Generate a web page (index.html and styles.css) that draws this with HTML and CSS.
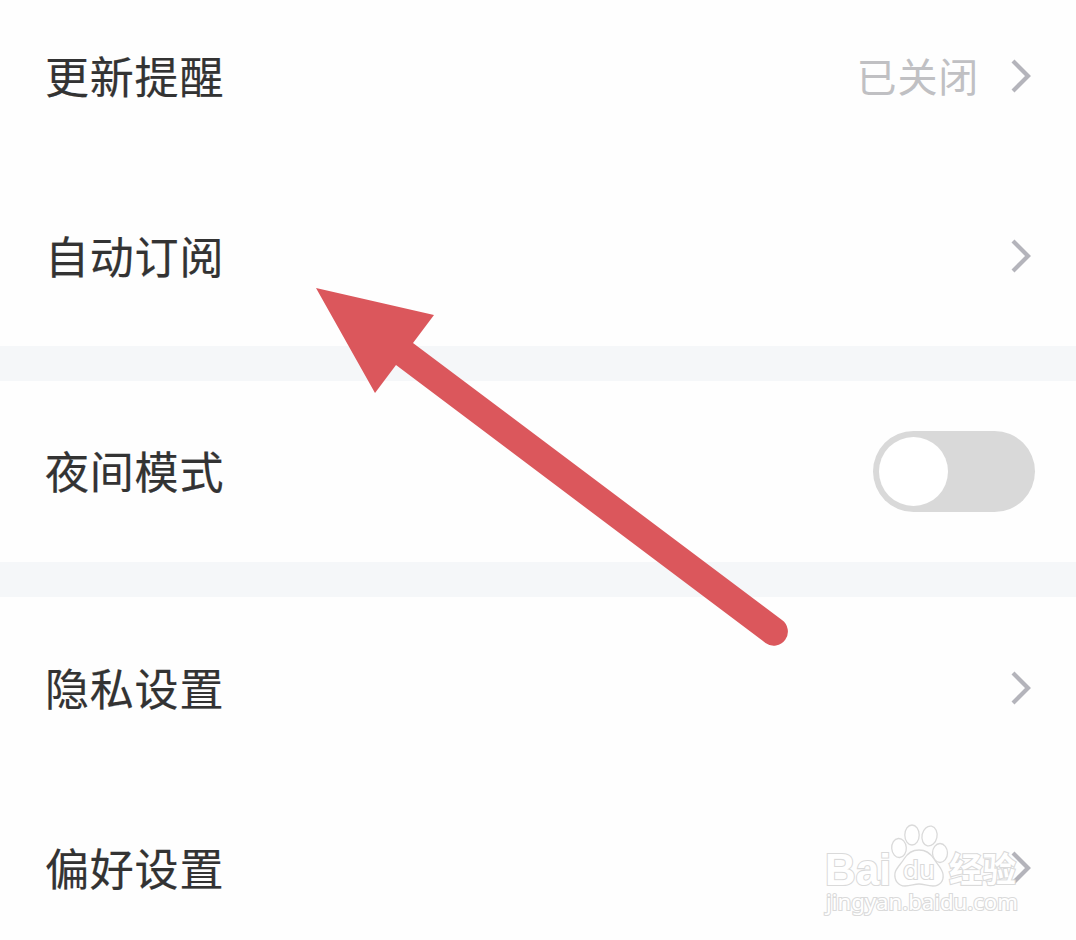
FILE: index.html
```html
<!DOCTYPE html>
<html lang="zh-CN">

<head>
    <meta charset="utf-8">
    <title>设置</title>
    <link rel="stylesheet" href="styles.css">
</head>

<body>
    <div class="settings">
        <div class="group first">
            <div class="item">
                <span class="label">更新提醒</span>
                <span class="value">已关闭</span>
                <svg class="chevron" viewBox="0 0 20 36"><path d="M2 3L17 18L2 33" /></svg>
            </div>
            <div class="item">
                <span class="label">自动订阅</span>
                <svg class="chevron" viewBox="0 0 20 36"><path d="M2 3L17 18L2 33" /></svg>
            </div>
        </div>
        <div class="group">
            <div class="item">
                <span class="label">夜间模式</span>
                <div class="switch"><div class="knob"></div></div>
            </div>
        </div>
        <div class="group last">
            <div class="item">
                <span class="label">隐私设置</span>
                <svg class="chevron" viewBox="0 0 20 36"><path d="M2 3L17 18L2 33" /></svg>
            </div>
            <div class="item">
                <span class="label">偏好设置</span>
                <svg class="chevron" viewBox="0 0 20 36"><path d="M2 3L17 18L2 33" /></svg>
            </div>
        </div>
    </div>

    <svg class="arrow" viewBox="0 0 480 366">
        <path d="M6 6L124 33L103 61L472 338A14 14 0 0 1 455.500 361L86 83L65 111Z" />
    </svg>

    <svg class="watermark" viewBox="0 0 240 120">
        <text class="brand" x="15" y="75" textLength="66" lengthAdjust="spacingAndGlyphs">Bai</text>
        <ellipse cx="89" cy="38" rx="7.3" ry="9.5" transform="rotate(-4 89 38)" />
        <ellipse cx="102" cy="25" rx="7.2" ry="10" />
        <ellipse cx="119.500" cy="26" rx="7.5" ry="10" transform="rotate(12 119.500 26)" />
        <ellipse cx="130" cy="43" rx="7.5" ry="9.5" />
        <path d="M109 40C102 40 97 44 94 49C91 54 86 58 85 63C84 70 88 76 95 76C101 76 104 74 109 74C114 74 117 76 123 76C130 76 134 71 133 64C132 58 127 54 124 49C121 44 116 40 109 40Z" />
        <text class="du" x="93" y="69" textLength="32" lengthAdjust="spacingAndGlyphs">du</text>
        <text class="cn" x="139" y="72" textLength="67" lengthAdjust="spacingAndGlyphs">经验</text>
        <text class="url" x="16" y="99.500" textLength="192" lengthAdjust="spacingAndGlyphs">jingyan.baidu.com</text>
    </svg>
</body>

</html>
```
FILE: styles.css
```css
body {
    margin: 0;
    position: relative;
    width: 1076px;
    height: 940px;
    overflow: hidden;
    background: #fefefe;
    font-family: "Noto Sans CJK SC", sans-serif;
}

.group {
    border-bottom: 35px solid #f5f7f9;
}

.group.first {
    margin-top: -14px;
}

.group.last {
    border-bottom: none;
    padding-top: 1px;
}

.item {
    display: flex;
    align-items: center;
    box-sizing: border-box;
    height: 180px;
    padding: 0 42px 0 45px;
}

.group:nth-child(2) .item {
    height: 181px;
}

.label {
    flex: 1;
    padding-bottom: 3px;
    font-size: 44px;
    line-height: 60px;
    letter-spacing: 0.8px;
    color: #333;
    -webkit-text-stroke: 0.2px #333;
}

.value {
    margin-right: 32px;
    padding-bottom: 3px;
    font-size: 40px;
    line-height: 60px;
    letter-spacing: 0.8px;
    color: #c0c0c3;
}

.chevron {
    width: 20px;
    height: 36px;
    margin-right: 3px;
    fill: none;
    stroke: #b4b4bb;
    stroke-width: 4.2;
}

.switch {
    box-sizing: border-box;
    width: 162px;
    height: 81px;
    margin-right: -1px;
    padding: 6px;
    border-radius: 41px;
    background: #d9d9d9;
}

.knob {
    width: 69px;
    height: 69px;
    border-radius: 50%;
    background: #fff;
}

.arrow {
    position: absolute;
    left: 310px;
    top: 282px;
    width: 480px;
    height: 366px;
    fill: #db575c;
}

.watermark {
    position: absolute;
    left: 810px;
    top: 810px;
    width: 240px;
    height: 120px;
    fill: #fff;
    stroke: #dadada;
    stroke-width: 1.3;
}

.watermark text {
    paint-order: stroke;
    stroke-width: 2.2;
}

.watermark .brand {
    font: bold 45px "Liberation Sans", sans-serif;
}

.watermark .du {
    font: 25px "DejaVu Sans", sans-serif;
}

.watermark .cn {
    font: bold 34px "Noto Sans CJK SC", sans-serif;
}

.watermark .url {
    font: 22px "Noto Sans", sans-serif;
}
```
